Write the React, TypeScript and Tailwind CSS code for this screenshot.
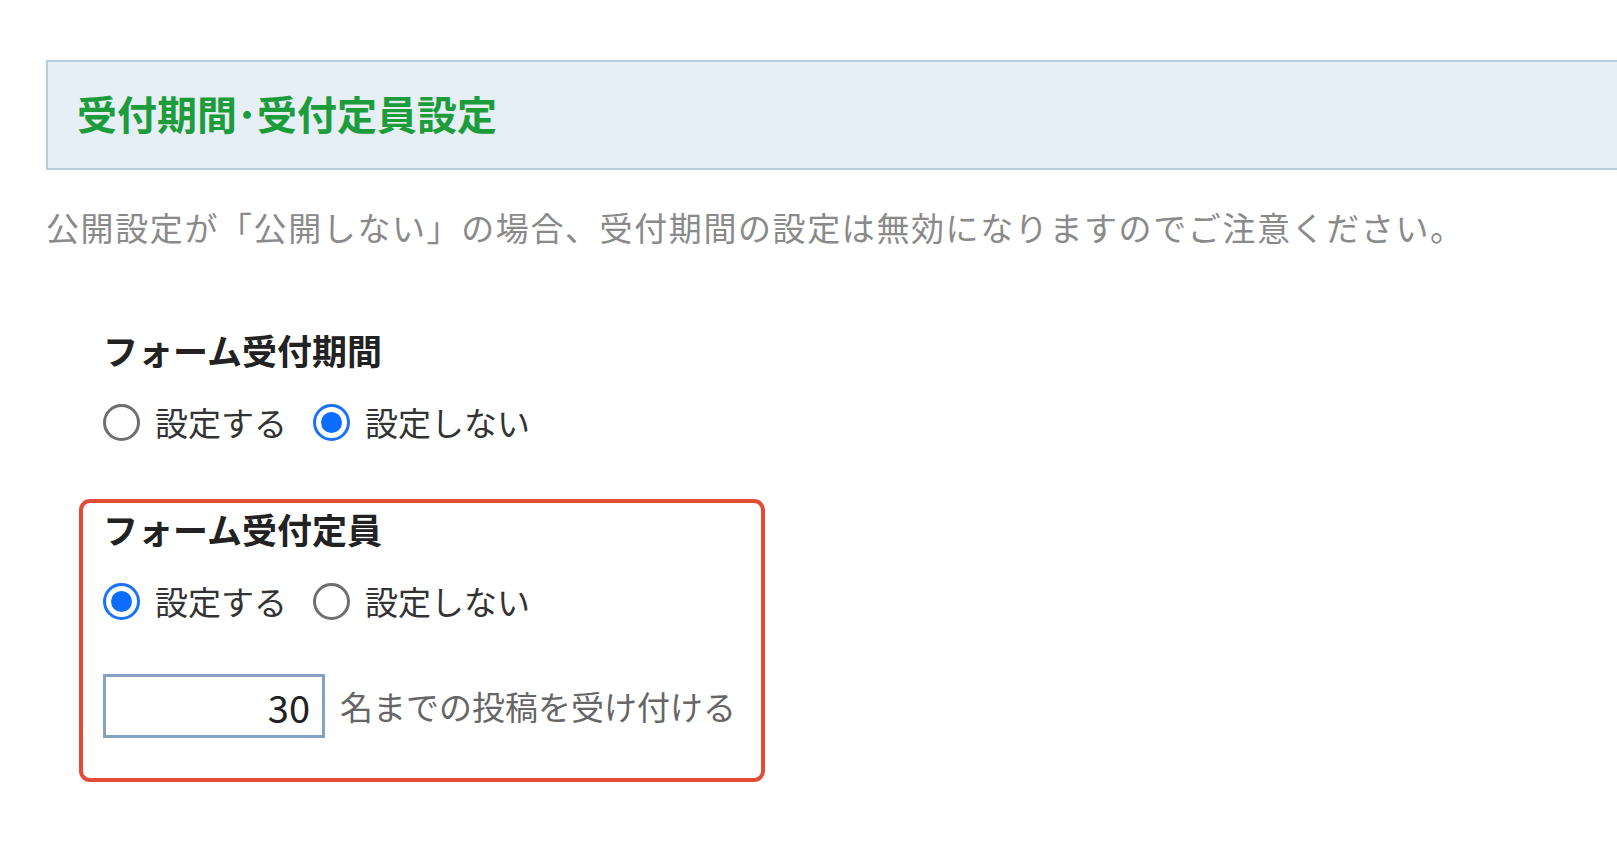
const jp = { fontFamily: '"Noto Sans CJK JP", "Noto Sans", sans-serif' };

const Radio = ({ checked, label }: { checked: boolean; label: string }) => (
  <label className="flex items-center h-[40px]">
    {checked ? (
      <span className="w-[37px] h-[37px] rounded-full border-[3px] border-[#1a73f5] flex items-center justify-center">
        <span className="w-[21px] h-[21px] rounded-full bg-[#0b6cff]"></span>
      </span>
    ) : (
      <span className="w-[37px] h-[37px] rounded-full border-[3px] border-[#6f6f6f] bg-white"></span>
    )}
    <span className="ml-[15px] text-[33px] text-[#333] leading-none">{label}</span>
  </label>
);

const RadioGroup = ({ on }: { on: boolean }) => (
  <div className="flex items-center gap-[26px] h-[40px]">
    <Radio checked={on} label="設定する" />
    <Radio checked={!on} label="設定しない" />
  </div>
);

export default function App() {
  return (
    <div className="bg-white min-h-screen w-full overflow-hidden pt-[60px] pl-[46px]" style={jp}>
      {/* section header */}
      <div className="h-[110px] w-[calc(100%+40px)] bg-[#e6eef6] border-y-2 border-l-2 border-[#b8cedc] flex items-center pl-[29px]">
        <h2 className="text-[40px] font-bold text-[#1c9c3b] leading-none -mt-[5px]">受付期間･受付定員設定</h2>
      </div>

      <p className="h-[40px] mt-[37px] flex items-center text-[33px] text-[#8a8a8a] leading-none tracking-[1.6px]">
        公開設定が「公開しない」の場合、受付期間の設定は無効になりますのでご注意ください。
      </p>

      <div className="pl-[57px]">
        <div className="mt-[82px]">
          <h3 className="h-[40px] flex items-center text-[35px] font-bold text-[#222] leading-none">フォーム受付期間</h3>
          <div className="mt-[33px]">
            <RadioGroup on={false} />
          </div>
        </div>

        <div className="mt-[57px] -ml-[24px] w-[686px] border-4 border-[#e24b38] rounded-[11px] pl-[20px] pt-[5px] pb-[40px]">
          <h3 className="h-[40px] flex items-center text-[35px] font-bold text-[#222] leading-none">フォーム受付定員</h3>
          <div className="mt-[33px]">
            <RadioGroup on={true} />
          </div>
          <div className="mt-[53px] flex items-center">
            <input
              type="text"
              defaultValue="30"
              className="w-[222px] h-[64px] border-[3px] border-[#86a2c2] bg-white text-right pr-[12px] text-[38px] text-[#222] outline-none"
              style={jp}
            />
            <span className="ml-[15px] text-[33px] text-[#666] leading-none">名までの投稿を受け付ける</span>
          </div>
        </div>
      </div>
    </div>
  );
}
